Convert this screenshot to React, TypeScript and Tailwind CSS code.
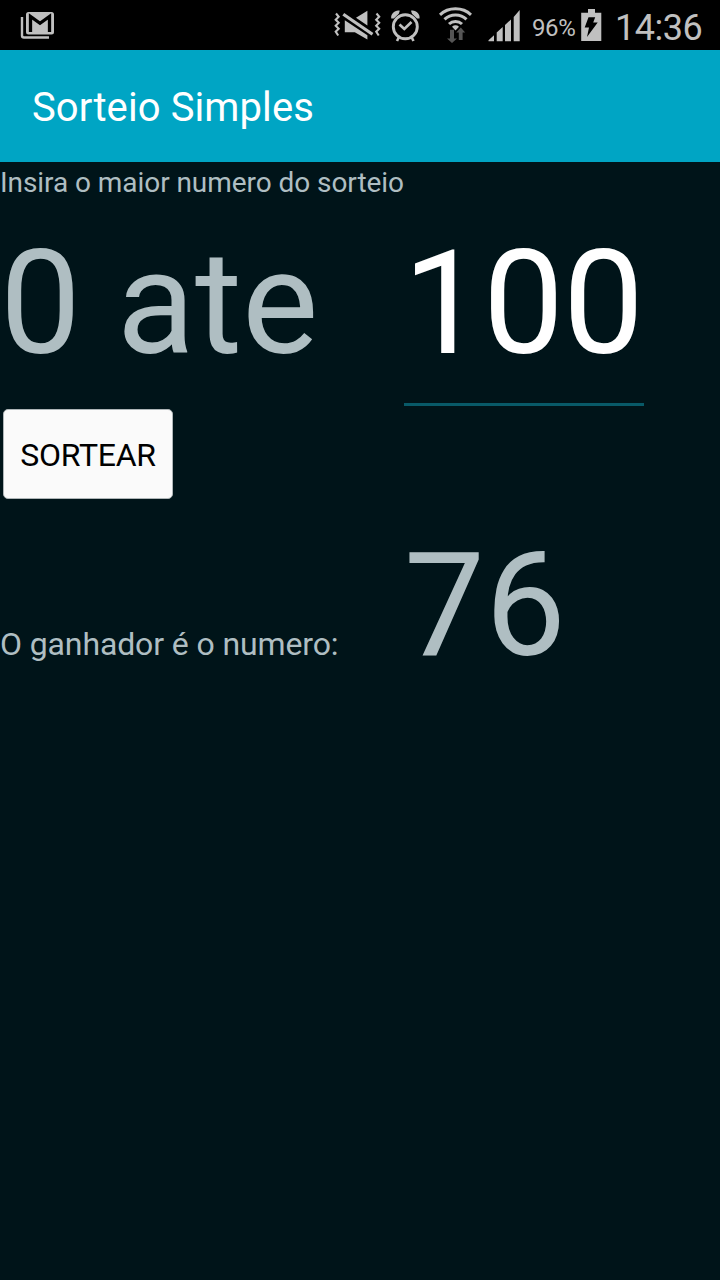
import React, { useState } from "react";

function MailIcon() {
  return (
    <svg width="36" height="30" viewBox="0 0 36 30" fill="none">
      <path d="M2 7v18.500a2 2 0 0 0 2 2h25" stroke="#c0c0c0" strokeWidth="2.400" />
      <rect x="6" y="2" width="28" height="22.500" rx="2.500" fill="#c0c0c0" />
      <path d="M10.500 22V6.500L20 13.300l9.500-6.800V22" stroke="#000" strokeWidth="3.300" />
    </svg>
  );
}

function MuteVibrateIcon() {
  return (
    <svg width="48" height="34" viewBox="333 8 48 34" fill="none">
      <path d="M336 13.500l2.700 3.200-3 3 3 3-3 3 3 3-3 3 2.500 3.800" stroke="#c0c0c0" strokeWidth="2.100" />
      <path d="M376.500 13.500l2.700 3.200-3 3 3 3-3 3 3 3-3 3 2.500 3.800" stroke="#c0c0c0" strokeWidth="2.100" />
      <path d="M344.800 20.200v12.100h10l12.600 7.200v-4.300zM367.400 10.800v14.700l-11.400-7.700z" fill="#c0c0c0" />
      <path d="M343.300 14.200l29.200 20" stroke="#c0c0c0" strokeWidth="3.200" />
    </svg>
  );
}

function AlarmIcon() {
  return (
    <svg width="32" height="34" viewBox="390 8 32 34" fill="none" stroke="#c0c0c0">
      <circle cx="405.300" cy="26.800" r="12" strokeWidth="2.900" />
      <path d="M399.500 24.500l4.800 4.500 7.200-7" strokeWidth="2.700" />
      <path d="M399 37l-2 4M411.500 37l2 4" strokeWidth="2.600" />
      <path d="M391.300 18.500c-1-4.500 4-9 8.500-7.800l-1 3-5 4.800zM419.500 18.500c1-4.500-4-9-8.500-7.800l1 3 5 4.800z" fill="#c0c0c0" stroke="none" />
    </svg>
  );
}

function WifiIcon() {
  return (
    <svg width="34" height="38" viewBox="438 6 34 38" fill="none">
      <g stroke="#c0c0c0" strokeWidth="3">
        <path d="M440 14.800c8.300-8 22.700-8 31 0" />
        <path d="M444.500 19.300c6-5.700 16-5.700 22 0" />
        <path d="M449 24c3.600-3.400 9.400-3.400 13 0" />
      </g>
      <path d="M452 26.700c2-1.800 5-1.800 7 0L455.500 30.500z" fill="#c0c0c0" />
      <path d="M450 29.700h4v8.800h3L452 43l-5-4.500h3zM460.800 27.500l4.400 5h-2.600v7.500h-3.800v-7.500h-2.600z" fill="#555" />
    </svg>
  );
}

function SignalIcon() {
  return (
    <svg width="33" height="34" viewBox="488 8 33 34" fill="#c0c0c0">
      <path d="M488.500 41.200v-1l5.500-4.900v5.900zM496.700 41.200v-8.700l6-5.400v14.100zM505 41.200V25l6-5.600v21.800zM513.700 41.200V16.900l6-6.900v31.200z" />
    </svg>
  );
}

function BatteryIcon() {
  return (
    <svg width="21" height="34" viewBox="581 8 21 34">
      <path d="M588 9h7v3.700h6.300V41H581.200V12.700h6.800z" fill="#c0c0c0" />
      <path d="M588.500 17.300h6.700l-2 5.300h4.500L587 37l2-9.600h-4.300z" fill="#000" />
    </svg>
  );
}

function StatusBar() {
  return (
    <div className="flex h-[50px] items-center bg-black pr-4 pl-5 text-[#c0c0c0]">
      <MailIcon />
      <div className="ml-auto flex items-center">
        <MuteVibrateIcon />
        <div className="ml-[9px]"><AlarmIcon /></div>
        <div className="ml-4"><WifiIcon /></div>
        <div className="ml-4"><SignalIcon /></div>
        <span className="ml-[11px] w-11 pt-[5px] text-2xl leading-7 tracking-[-0.4px] whitespace-nowrap">96%</span>
        <div className="ml-[5px]"><BatteryIcon /></div>
        <span className="ml-[13px] w-[89px] pt-1.5 text-[36px] leading-[42px] tracking-[-0.5px] whitespace-nowrap">14:36</span>
      </div>
    </div>
  );
}

export default function App() {
  const [limit, setLimit] = useState("100");
  const [winner, setWinner] = useState(76);

  return (
    <div className="flex h-[1280px] w-[720px] flex-col overflow-hidden bg-[#001419] font-['Roboto',sans-serif] text-[#afbec2]">
      <StatusBar />
      <header className="flex h-28 items-center bg-[#00a5c4] px-8 pt-1">
        <h1 className="text-[40px] leading-[48px] tracking-[0.1px] text-white">Sorteio Simples</h1>
      </header>
      <main className="flex flex-col">
        <p className="h-[57px] pt-1 text-[28px] leading-[33px] tracking-[-0.06px]">Insira o maior numero do sorteio</p>
        <div className="flex h-[187px] items-start text-[144px] leading-[169px]">
          <span className="w-[404px] whitespace-pre">0 ate</span>
          <input
            aria-label="Maior numero"
            className="h-[187px] w-60 border-b-[3px] border-[#085a68] bg-transparent p-0 pb-[15px] -indent-px tracking-[-0.9px] text-white outline-none"
            value={limit}
            onChange={(e) => setLimit(e.target.value)}
          />
        </div>
        <button
          className="mt-[3px] ml-[3px] h-[90px] w-[170px] rounded-[5px] border border-[#aeb5b7] bg-[#fafafa] pt-0.5 text-[32px] leading-[38px] tracking-[-0.3px] text-black"
          onClick={() => setWinner(Math.floor(Math.random() * (Number(limit) + 1)))}
        >
          SORTEAR
        </button>
        <div className="mt-[22px] flex items-baseline leading-[169px]">
          <span className="w-[404px] text-[32px] leading-[38px] tracking-[-0.12px]">O ganhador é o numero:</span>
          <span className="text-[144px]">{winner}</span>
        </div>
      </main>
    </div>
  );
}
